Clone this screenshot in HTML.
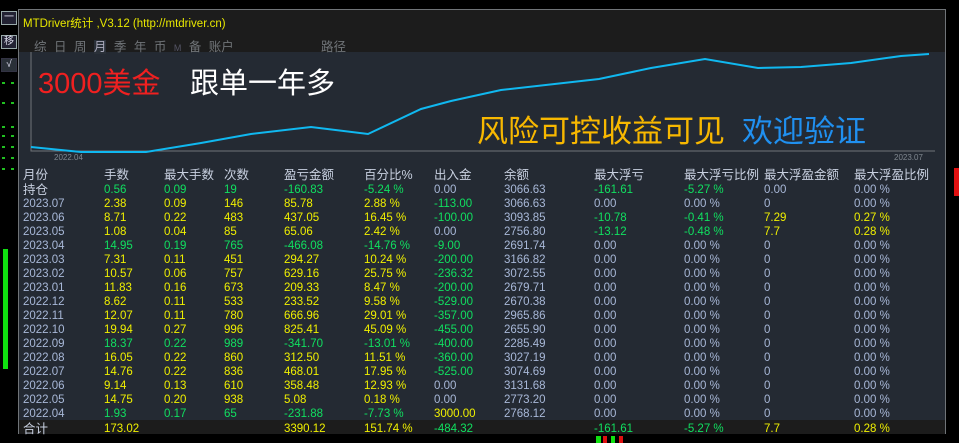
<!DOCTYPE html>
<html><head><meta charset="utf-8"><style>
body{margin:0;width:959px;height:443px;background:#000;position:relative;overflow:hidden;font-family:"Liberation Sans","Noto Sans CJK SC",sans-serif}
.a{position:absolute;white-space:nowrap}
#p{position:absolute;left:18px;top:9px;width:928px;height:425px;background:#242a33;border:1px solid #707478;box-sizing:border-box}
#tb{position:absolute;left:0;top:0;width:926px;height:42px;background:#1c1c1c}
.r{position:absolute;left:0;width:926px;height:14px;font-size:11.5px;line-height:14px}
.r span{position:absolute;top:0}
.y{color:#f0f000}.g{color:#10e060}.b{color:#a8b8d8}.w{color:#c8d0e0}
.btn{position:absolute;left:1px;width:14px;height:12px;border:1px solid #9aa;background:#223;color:#dde;font-size:10px;line-height:12px;text-align:center}
.d{position:absolute;height:2px;background:#20c020}
</style></head><body>
<div class="btn" style="top:11px">一</div>
<div class="btn" style="top:35px">移</div>
<div class="btn" style="top:58px;border-color:#334;background:#2a3038">√</div>
<div class="d" style="left:2px;top:82px;width:3px"></div><div class="d" style="left:11px;top:82px;width:3px"></div>
<div class="d" style="left:2px;top:102px;width:3px"></div><div class="d" style="left:11px;top:102px;width:3px"></div>
<div class="d" style="left:2px;top:126px;width:3px"></div><div class="d" style="left:11px;top:126px;width:3px"></div>
<div class="d" style="left:2px;top:135px;width:3px"></div><div class="d" style="left:11px;top:135px;width:3px"></div>
<div class="d" style="left:2px;top:146px;width:3px"></div><div class="d" style="left:11px;top:146px;width:3px"></div>
<div class="d" style="left:2px;top:157px;width:3px"></div><div class="d" style="left:11px;top:157px;width:3px"></div>
<div class="d" style="left:2px;top:168px;width:3px"></div><div class="d" style="left:11px;top:168px;width:3px"></div>
<div class="a" style="left:3px;top:249px;width:5px;height:120px;background:#10e010"></div>
<div class="a" style="left:954px;top:168px;width:5px;height:28px;background:#e01010"></div>
<div class="a" style="left:596px;top:436px;width:5px;height:7px;background:#10e010"></div>
<div class="a" style="left:603px;top:436px;width:4px;height:7px;background:#e01010"></div>
<div class="a" style="left:611px;top:436px;width:4px;height:7px;background:#10e010"></div>
<div class="a" style="left:619px;top:436px;width:4px;height:7px;background:#e01010"></div>
<div id="p">
<div id="tb"></div>
<div class="a" style="left:4px;top:5px;font-size:11.5px;color:#e8e800">MTDriver统计 ,V3.12 (http://mtdriver.cn)</div>
<div class="a" style="left:15px;top:26px;font-size:12.5px;color:#707478;word-spacing:4px">综 日 周 <span style="background:#2a3038;color:#aab">月</span> 季 年 币 <span style="font-size:9px;color:#556">M</span> 备 账户</div>
<div class="a" style="left:302px;top:26px;font-size:12.5px;color:#707478">路径</div>
<svg class="a" style="left:0;top:0" width="928" height="160">
<polyline fill="none" stroke="#707478" stroke-width="1" points="12,42 12,141 916,141"/>
<polyline fill="none" stroke="#10b8f0" stroke-width="2" points="12,137 32,139 62,142 127,142 182,133 232,124 292,117 349,124 402,99 432,91 482,80 580,69 632,58 686,49 739,58 782,57 832,53 882,46 910,44"/>
</svg>
<div class="a" style="left:35px;top:143px;font-size:8px;color:#808890">2022.04</div>
<div class="a" style="left:875px;top:143px;font-size:8px;color:#808890">2023.07</div>
<div class="a" style="left:19px;top:50px;font-size:29px;color:#f02020">3000美金</div>
<div class="a" style="left:171px;top:50px;font-size:29px;color:#fff">跟单一年多</div>
<div class="a" style="left:458px;top:96px;font-size:31px;color:#f8b800">风险可控收益可见</div>
<div class="a" style="left:723px;top:96px;font-size:31px;color:#2090f0">欢迎验证</div>
<div class="a" style="left:0;top:410px;width:926px;height:14px;background:#1c1c1c"></div>
<div id="rows"></div>
</div>
<script>
var X=[4,85,145,205,265,345,415,485,575,665,745,835];
var H=["月份","手数","最大手数","次数","盈亏金额","百分比%","出入金","余额","最大浮亏","最大浮亏比例","最大浮盈金额","最大浮盈比例"];
var D=[
["持仓","0.56","0.09","19","-160.83","-5.24 %","0.00","3066.63","-161.61","-5.27 %","0.00","0.00 %"],
["2023.07","2.38","0.09","146","85.78","2.88 %","-113.00","3066.63","0.00","0.00 %","0","0.00 %"],
["2023.06","8.71","0.22","483","437.05","16.45 %","-100.00","3093.85","-10.78","-0.41 %","7.29","0.27 %"],
["2023.05","1.08","0.04","85","65.06","2.42 %","0.00","2756.80","-13.12","-0.48 %","7.7","0.28 %"],
["2023.04","14.95","0.19","765","-466.08","-14.76 %","-9.00","2691.74","0.00","0.00 %","0","0.00 %"],
["2023.03","7.31","0.11","451","294.27","10.24 %","-200.00","3166.82","0.00","0.00 %","0","0.00 %"],
["2023.02","10.57","0.06","757","629.16","25.75 %","-236.32","3072.55","0.00","0.00 %","0","0.00 %"],
["2023.01","11.83","0.16","673","209.33","8.47 %","-200.00","2679.71","0.00","0.00 %","0","0.00 %"],
["2022.12","8.62","0.11","533","233.52","9.58 %","-529.00","2670.38","0.00","0.00 %","0","0.00 %"],
["2022.11","12.07","0.11","780","666.96","29.01 %","-357.00","2965.86","0.00","0.00 %","0","0.00 %"],
["2022.10","19.94","0.27","996","825.41","45.09 %","-455.00","2655.90","0.00","0.00 %","0","0.00 %"],
["2022.09","18.37","0.22","989","-341.70","-13.01 %","-400.00","2285.49","0.00","0.00 %","0","0.00 %"],
["2022.08","16.05","0.22","860","312.50","11.51 %","-360.00","3027.19","0.00","0.00 %","0","0.00 %"],
["2022.07","14.76","0.22","836","468.01","17.95 %","-525.00","3074.69","0.00","0.00 %","0","0.00 %"],
["2022.06","9.14","0.13","610","358.48","12.93 %","0.00","3131.68","0.00","0.00 %","0","0.00 %"],
["2022.05","14.75","0.20","938","5.08","0.18 %","0.00","2773.20","0.00","0.00 %","0","0.00 %"],
["2022.04","1.93","0.17","65","-231.88","-7.73 %","3000.00","2768.12","0.00","0.00 %","0","0.00 %"],
["合计","173.02","","","3390.12","151.74 %","-484.32","","-161.61","-5.27 %","7.7","0.28 %"]];
var h='<div class="r w" style="top:158px;font-size:12.5px">'+H.map(function(t,i){return '<span style="left:'+X[i]+'px">'+t+'</span>'}).join('')+'</div>';
D.forEach(function(r,k){
 var neg=r[4].charAt(0)=='-';var row='';
 r.forEach(function(t,i){var c;
  if(i==0)c=k==0||k==17?'w':'b';
  else if(i<=5)c=neg?'g':'y';
  else if(i==6||i==8||i==9){c=t.charAt(0)=='-'?'g':(t=='3000.00'?'y':'b');}
  else if(i==7)c='b';
  else c=(t=='0'||t=='0.00'||t=='0.00 %')?'b':'y';
  var fs=(i==0&&(k==0||k==17))?';font-size:12.5px':'';
  row+='<span class="'+c+'" style="left:'+X[i]+'px'+fs+'">'+t+'</span>';});
 h+='<div class="r" style="top:'+(173+k*14+(k==17?1:0))+'px">'+row+'</div>';});
document.getElementById('rows').innerHTML=h;
</script>
</body></html>
